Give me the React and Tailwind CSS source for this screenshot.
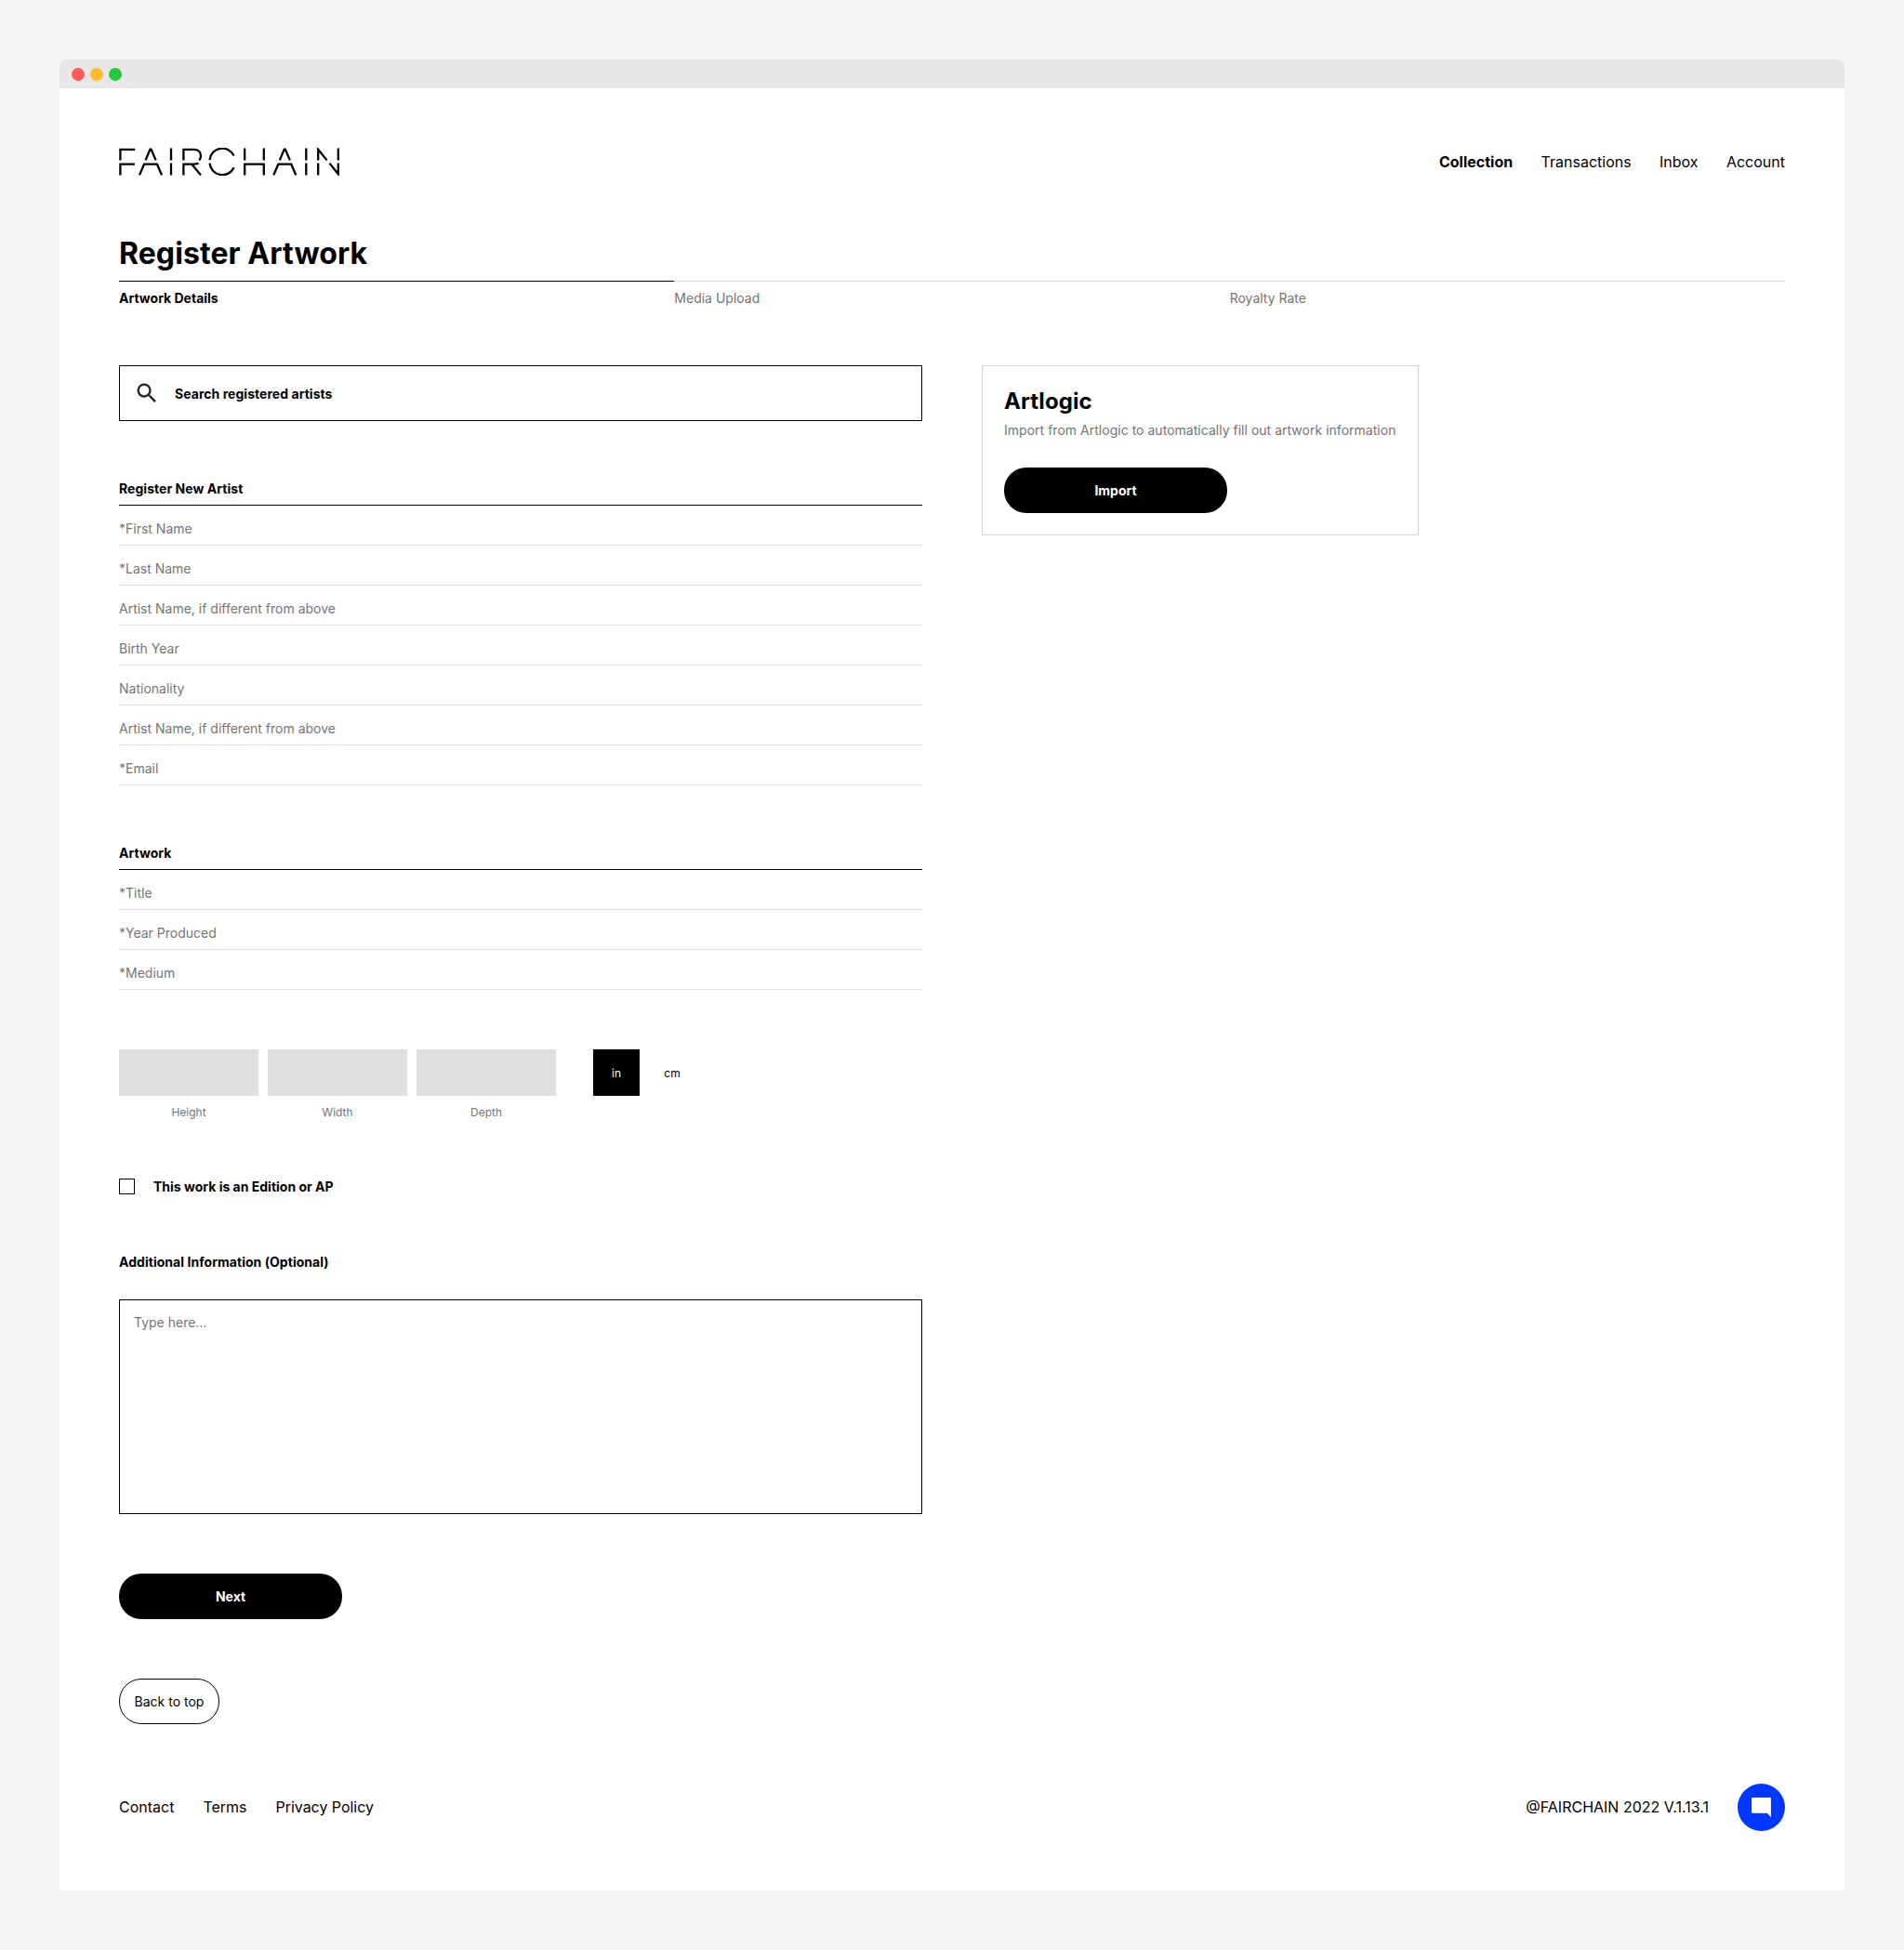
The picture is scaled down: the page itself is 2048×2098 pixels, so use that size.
const navItems = ["Transactions", "Inbox", "Account"];

const artistFields = [
  "*First Name",
  "*Last Name",
  "Artist Name, if different from above",
  "Birth Year",
  "Nationality",
  "Artist Name, if different from above",
  "*Email",
];

const artworkFields = ["*Title", "*Year Produced", "*Medium"];

const dimensions = ["Height", "Width", "Depth"];

function Logo() {
  return (
    <svg width="238" height="30" viewBox="0 0 238 30" fill="none" stroke="#000" strokeWidth="2.3" aria-label="Fairchain">
      {/* F */}
      <path d="M1.4 13.4V1.8H17.2M1.4 29.4V17.7H16.9" />
      {/* A */}
      <path d="M28.5 13.4L33.5 1.6H34.5L39.6 13.4M22 29.4L27 17.7H41L46 29.4" />
      {/* I */}
      <path d="M56 .6V13.4M56 16.6V29.4" />
      {/* R */}
      <path d="M69.4 13.4V1.8H80.5C85.5 1.8 88 4.8 88 8.6C88 10.6 87.4 12.2 86.2 13.4M69.4 29.4V17.7H80.5L85.6 16.8M78.6 18L88 29.4" />
      {/* C */}
      <path d="M97.5 13.2A13.7 13.7 0 0 1 123.6 8.6M97.5 16.6A13.7 13.7 0 0 0 123.6 21.2" />
      {/* H */}
      <path d="M135.2 .6V13.4M155.8 .6V13.4M135.2 29.4V17.7H155.8V29.4" />
      {/* A */}
      <path d="M172.8 13.4L177.8 1.6H178.8L183.9 13.4M166.3 29.4L171.3 17.7H185.3L190.3 29.4" />
      {/* I */}
      <path d="M201.3 .6V13.4M201.3 16.6V29.4" />
      {/* N */}
      <path d="M214.2 13.4V1.8L223.6 13.4M214.2 16.6V29.4M235.8 .6V13.4M235.8 16.6V28.2L226.4 16.6" />
    </svg>
  );
}

function Section({ title, fields }) {
  return (
    <section>
      <h2 className="border-b border-black pb-[9px] font-bold tracking-[0.04px]">{title}</h2>
      {fields.map((label, i) => (
        <div key={i} className="border-b border-[#e0e0e0] pt-4 pb-[9px] text-[#757575]">
          {label}
        </div>
      ))}
    </section>
  );
}

export default function App() {
  return (
    <div className="h-[2098px] w-[2048px] bg-[#f5f5f5] p-16 font-['Inter',sans-serif] text-[14px] leading-[17px] text-black">
      <div className="h-[1970px] overflow-hidden rounded-t-lg bg-white">
        <div className="flex h-[31px] items-center gap-[6px] bg-[#e7e7e7] pt-px pl-[12.5px]">
          <span className="size-[14px] rounded-full bg-[#ff5f57]" />
          <span className="size-[14px] rounded-full bg-[#febc2e]" />
          <span className="size-[14px] rounded-full bg-[#28c840]" />
        </div>

        <div className="p-16">
          <header className="flex h-[30px] items-center justify-between">
            <Logo />
            <nav className="flex gap-[30.4px] text-[16px] leading-[19px]">
              <span className="font-bold">Collection</span>
              {navItems.map((n) => (
                <span key={n}>{n}</span>
              ))}
            </nav>
          </header>

          <h1 className="mt-16 text-[32px] leading-[39px] font-bold tracking-[0.08px]">Register Artwork</h1>
          <div className="mt-[10px] grid grid-cols-3">
            <div className="border-t border-black pt-[9px] font-bold">Artwork Details</div>
            <div className="border-t border-[#d6d6d6] pt-[9px] text-[#757575]">Media Upload</div>
            <div className="border-t border-[#d6d6d6] pt-[9px] text-[#757575]">Royalty Rate</div>
          </div>

          <div className="mt-16 flex items-start gap-16">
            <main className="flex w-[864px] flex-col gap-16">
              <div className="flex h-[60px] items-center gap-4 border border-black px-[15px]">
                <svg width="28" height="28" viewBox="0 0 24 24" fill="#222">
                  <path d="M15.5 14h-.79l-.28-.27A6.47 6.47 0 0 0 16 9.5 6.5 6.5 0 1 0 9.5 16c1.61 0 3.09-.59 4.23-1.57l.27.28v.79l5 4.99L20.49 19l-4.99-5zm-6 0C7.01 14 5 11.99 5 9.5S7.01 5 9.5 5 14 7.01 14 9.5 11.99 14 9.5 14z" />
                </svg>
                <span className="font-bold tracking-[0.04px]">Search registered artists</span>
              </div>

              <Section title="Register New Artist" fields={artistFields} />
              <Section title="Artwork" fields={artworkFields} />

              <div className="flex gap-[10px] text-[12px] leading-[15px]">
                {dimensions.map((d) => (
                  <div key={d} className="w-[150px] text-center text-[#757575]">
                    <div className="mb-[10px] h-[50px] bg-[#e0e0e0]" />
                    {d}
                  </div>
                ))}
                <div className="ml-[30px] flex size-[50px] items-center justify-center bg-black text-white">in</div>
                <div className="flex size-[50px] items-center justify-center">cm</div>
              </div>

              <label className="flex items-center gap-5 font-bold">
                <span className="size-[17px] border border-black" />
                This work is an Edition or AP
              </label>

              <div>
                <h2 className="font-bold tracking-[0.04px]">Additional Information (Optional)</h2>
                <div className="mt-8 h-[231px] border border-black p-[15px] text-[#757575]">Type here...</div>
              </div>

              <button className="h-[49px] w-[240px] rounded-3xl bg-black font-bold text-white">Next</button>
              <button className="h-[49px] w-[108px] rounded-3xl border border-black whitespace-nowrap">Back to top</button>
            </main>

            <aside className="h-[183px] w-[470px] border border-[#d6d6d6] p-[23px]">
              <h2 className="text-[24px] leading-[29px] font-bold tracking-[0.1px]">Artlogic</h2>
              <p className="mt-2 whitespace-nowrap tracking-[0.02px] text-[#757575]">
                Import from Artlogic to automatically fill out artwork information
              </p>
              <button className="mt-8 h-[49px] w-[240px] rounded-3xl bg-black font-bold text-white">Import</button>
            </aside>
          </div>

          <footer className="mt-16 flex h-[51px] items-center justify-between text-[16px] leading-[19px]">
            <div className="flex gap-[31px]">
              <span>Contact</span>
              <span>Terms</span>
              <span className="tracking-[-0.04px]">Privacy Policy</span>
            </div>
            <div className="flex items-center gap-[31px]">
              <span>@FAIRCHAIN 2022 V.1.13.1</span>
              <button className="flex size-[51px] items-center justify-center rounded-full bg-[#0038ff]" aria-label="Chat">
                <svg width="25" height="25" viewBox="0 0 24 24" fill="#fff">
                  <path d="M22 3c0-.55-.45-1-1-1H3c-.55 0-1 .45-1 1v14c0 .55.45 1 1 1h15l4 4z" />
                </svg>
              </button>
            </div>
          </footer>
        </div>
      </div>
    </div>
  );
}
